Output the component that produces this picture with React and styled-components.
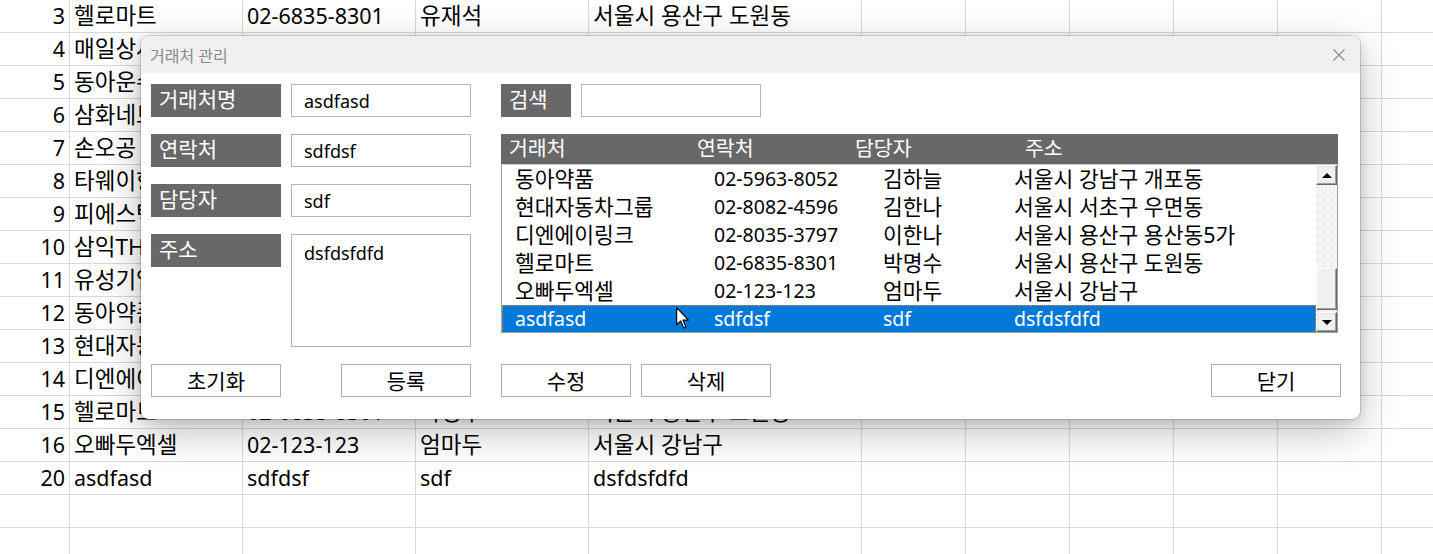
import React from "react";
import styled, { createGlobalStyle } from "styled-components";

const GlobalStyle = createGlobalStyle`
  html, body {
    margin: 0;
    padding: 0;
    background: #fff;
  }
  body {
    font-family: "Noto Sans", "Noto Sans CJK KR", sans-serif;
    overflow: hidden;
  }
  * {
    box-sizing: border-box;
  }
`;

// hangul runs a touch wider in the original font, so those cells get a bigger size
const isKo = (s) => /[\uac00-\ud7a3]/.test(s);

// rows 4-14 sit under the dialog; only the start of the name column shows
const sheetRows = [
  ["3", "헬로마트", "02-6835-8301", "유재석", "서울시 용산구 도원동"],
  ["4", "매일상사", "", "", ""],
  ["5", "동아운수", "", "", ""],
  ["6", "삼화네트", "", "", ""],
  ["7", "손오공", "", "", ""],
  ["8", "타웨이항", "", "", ""],
  ["9", "피에스텍", "", "", ""],
  ["10", "삼익THK", "", "", ""],
  ["11", "유성기업", "", "", ""],
  ["12", "동아약품", "", "", ""],
  ["13", "현대자동", "", "", ""],
  ["14", "디엔에이", "", "", ""],
  ["15", "헬로마트", "02-6835-8301", "박명수", "서울시 용산구 도원동"],
  ["16", "오빠두엑셀", "02-123-123", "엄마두", "서울시 강남구"],
  ["20", "asdfasd", "sdfdsf", "sdf", "dsfdsfdfd"],
  ["", "", "", "", ""],
  ["", "", "", "", ""],
];

const listRows = [
  ["동아약품", "02-5963-8052", "김하늘", "서울시 강남구 개포동"],
  ["현대자동차그룹", "02-8082-4596", "김한나", "서울시 서초구 우면동"],
  ["디엔에이링크", "02-8035-3797", "이한나", "서울시 용산구 용산동5가"],
  ["헬로마트", "02-6835-8301", "박명수", "서울시 용산구 도원동"],
  ["오빠두엑셀", "02-123-123", "엄마두", "서울시 강남구"],
  ["asdfasd", "sdfdsf", "sdf", "dsfdsfdfd"],
];

export default function App() {
  return (
    <Page>
      <GlobalStyle />

      {/* Sheet behind the dialog */}

      <Sheet>
        {sheetRows.map((row, i) => (
          <SheetRow key={i}>
            <RowNum>{row[0]}</RowNum>
            {row.slice(1).map((t, j) => (
              <Cell key={j} $ko={isKo(t)}>
                {t}
              </Cell>
            ))}
            <Cell />
            <Cell />
            <Cell />
            <Cell />
            <Cell />
            <Cell />
          </SheetRow>
        ))}
      </Sheet>

      {/* Dialog */}

      <Window>
        <TitleBar>
          <Title>거래처 관리</Title>
          <CloseIcon width="12" height="12" viewBox="0 0 12 12">
            <path d="M0.5 0.5 L11.5 11.5 M11.5 0.5 L0.5 11.5" />
          </CloseIcon>
        </TitleBar>

        <Body>
          <Top>
            <Form>
              <Field>
                <Label>거래처명</Label>
                <Input>asdfasd</Input>
              </Field>
              <Field>
                <Label>연락처</Label>
                <Input>sdfdsf</Input>
              </Field>
              <Field>
                <Label>담당자</Label>
                <Input>sdf</Input>
              </Field>
              <Field>
                <Label>주소</Label>
                <TextArea>dsfdsfdfd</TextArea>
              </Field>
            </Form>

            <Panel>
              <Field>
                <Label $width={70}>검색</Label>
                <Input />
              </Field>

              <ListBox>
                <ListHeader>
                  <span>거래처</span>
                  <span>연락처</span>
                  <span>담당자</span>
                  <span>주소</span>
                </ListHeader>
                <ListBody>
                  <Rows>
                    {listRows.map((r, i) => (
                      <ListRow key={i} $selected={i === listRows.length - 1}>
                        {r.map((t, j) => (
                          <ListCell key={j} $ko={isKo(t)}>
                            {t}
                          </ListCell>
                        ))}
                      </ListRow>
                    ))}
                  </Rows>
                  <ScrollBar>
                    <ScrollButton>
                      <Arrow $up />
                    </ScrollButton>
                    <Track>
                      <Thumb />
                    </Track>
                    <ScrollButton>
                      <Arrow />
                    </ScrollButton>
                  </ScrollBar>
                </ListBody>
              </ListBox>
            </Panel>
          </Top>

          <Buttons>
            <Button>초기화</Button>
            <Button $gap={60}>등록</Button>
            <Button $gap={30}>수정</Button>
            <Button $gap={10}>삭제</Button>
            <Button $push>닫기</Button>
          </Buttons>
        </Body>
      </Window>

      <Cursor width="14" height="22" viewBox="0 0 12 19">
        <path
          d="M0.5 0.5 L0.5 15.5 L4 12 L6.5 18 L8.5 17.2 L6 11.3 L10.8 11.3 Z"
          fill="#fff"
          stroke="#000"
          strokeWidth="1"
          strokeLinejoin="round"
        />
      </Cursor>
    </Page>
  );
}

const Page = styled.div`
  position: relative;
  width: 1433px;
  height: 554px;
  overflow: hidden;
  background: #fff;
`;

const Sheet = styled.div`
  display: flex;
  flex-direction: column;
`;

const SheetRow = styled.div`
  display: grid;
  grid-template-columns: 70px 173px 173px 173px 273px 104px 104px 104px 104px 104px 104px;
  height: 33px;
  border-bottom: 1px solid #d9d9d9;
`;

const Cell = styled.div`
  border-right: 1px solid #d9d9d9;
  padding-left: 4px;
  font-size: ${(p) => (p.$ko ? "22.5px" : "21.5px")};
  line-height: 32px;
  color: #000;
  white-space: nowrap;
  overflow: hidden;
`;

const RowNum = styled(Cell)`
  text-align: right;
  padding-left: 0;
  padding-right: 4px;
`;

const Window = styled.div`
  position: absolute;
  left: 141px;
  top: 36px;
  width: 1219px;
  height: 383px;
  background: #fff;
  border-radius: 8px;
  overflow: hidden;
  box-shadow: 0 0 0 1px rgba(0, 0, 0, 0.14), 0 12px 40px rgba(0, 0, 0, 0.26),
    0 2px 10px rgba(0, 0, 0, 0.12);
`;

const TitleBar = styled.div`
  height: 37px;
  background: #f0f0f0;
  display: flex;
  align-items: center;
  justify-content: space-between;
  padding: 0 15px 0 9px;
`;

const Title = styled.div`
  font-size: 16px;
  color: #8a8a8a;
`;

const CloseIcon = styled.svg`
  stroke: #8a8a8a;
  stroke-width: 1.1;
  fill: none;
`;

const Body = styled.div`
  padding: 11px 19px 0 10px;
  display: flex;
  flex-direction: column;
  gap: 17px;
`;

const Top = styled.div`
  display: flex;
  gap: 30px;
`;

const Form = styled.div`
  width: 320px;
  display: flex;
  flex-direction: column;
  gap: 17px;
`;

const Field = styled.div`
  display: flex;
  align-items: flex-start;
  gap: 10px;
`;

const Label = styled.div`
  width: ${(p) => p.$width || 130}px;
  height: 33px;
  background: #686868;
  color: #fff;
  font-size: 21px;
  line-height: 30px;
  padding-left: 8px;
  white-space: nowrap;
`;

const Input = styled.div`
  width: 180px;
  height: 33px;
  border: 1px solid #b4b4b4;
  padding: 0 12px;
  font-size: 18px;
  line-height: 33px;
  color: #000;
`;

const TextArea = styled(Input)`
  height: 113px;
  line-height: 36px;
`;

const Panel = styled.div`
  width: 837px;
  display: flex;
  flex-direction: column;
  gap: 17px;
`;

const ListBox = styled.div`
  height: 199px;
  display: flex;
  flex-direction: column;
`;

const ListHeader = styled.div`
  height: 30px;
  background: #686868;
  color: #fff;
  font-size: 20.5px;
  line-height: 29px;
  padding-left: 8px;
  display: grid;
  grid-template-columns: 188px 158px 170px 1fr;
  white-space: nowrap;
`;

const ListBody = styled.div`
  flex: 1;
  display: flex;
  border: 1px solid #a0a0a0;
  border-top-color: #cfcfcf;
  min-height: 0;
`;

const Rows = styled.div`
  flex: 1;
  overflow: hidden;
`;

const ListRow = styled.div`
  height: 28px;
  display: grid;
  grid-template-columns: 199px 169px 131px 1fr;
  padding-left: 13px;
  line-height: 28px;
  white-space: nowrap;
  color: ${(p) => (p.$selected ? "#fff" : "#000")};
  background: ${(p) => (p.$selected ? "#0078d7" : "transparent")};
  outline: ${(p) => (p.$selected ? "1px dotted #d98b3a" : "none")};
  outline-offset: -1px;
`;

const ListCell = styled.span`
  font-size: ${(p) => (p.$ko ? "21.5px" : "19.5px")};
`;

const ScrollBar = styled.div`
  width: 21px;
  display: flex;
  flex-direction: column;
  background: #f0f0f0;
`;

const ScrollButton = styled.div`
  height: 20px;
  background: #f0f0f0;
  border: 1px solid;
  border-color: #fff #696969 #696969 #fff;
  box-shadow: inset -1px -1px 0 #a0a0a0, inset 1px 1px 0 #e3e3e3;
  display: flex;
  align-items: center;
  justify-content: center;
`;

const Arrow = styled.div`
  width: 0;
  height: 0;
  border-left: 5px solid transparent;
  border-right: 5px solid transparent;
  ${(p) =>
    p.$up
      ? "border-bottom: 5px solid #000;"
      : "border-top: 5px solid #000;"}
`;

const Track = styled.div`
  flex: 1;
  display: flex;
  flex-direction: column;
  justify-content: flex-end;
  padding-bottom: 2px;
  background: repeating-conic-gradient(#ffffff 0 25%, #ececec 0 50%) 0 0 / 2px
    2px;
`;

const Thumb = styled.div`
  height: 42px;
  background: #f0f0f0;
  border: 1px solid;
  border-color: #fff #696969 #696969 #fff;
  box-shadow: inset -1px -1px 0 #a0a0a0;
`;

const Buttons = styled.div`
  display: flex;
`;

const Button = styled.div`
  width: 130px;
  height: 33px;
  margin-left: ${(p) => (p.$push ? "auto" : `${p.$gap || 0}px`)};
  border: 1px solid #adadad;
  background: #fff;
  color: #000;
  font-size: 21px;
  line-height: 32px;
  text-align: center;
`;

const Cursor = styled.svg`
  position: absolute;
  left: 676px;
  top: 307px;
`;
